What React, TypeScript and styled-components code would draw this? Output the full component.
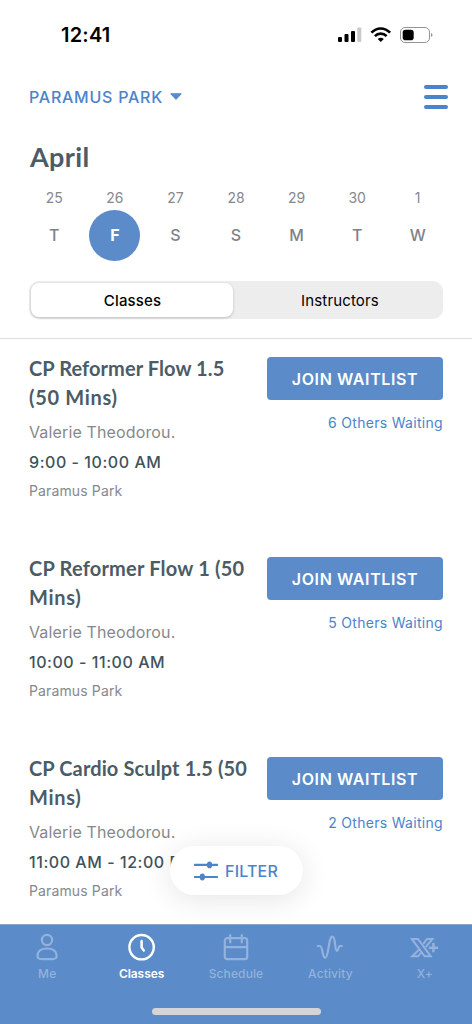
import React from 'react';
import styled, { createGlobalStyle } from 'styled-components';

const BLUE = '#5b8bc9';
const LINK = '#4a84cb';
const SLATE = '#4b5c66';
const GREY = '#85888e';

const GlobalStyle = createGlobalStyle`
  *, *::before, *::after { box-sizing: border-box; }
  body {
    margin: 0;
    background: #fff;
    font-family: Inter, "Liberation Sans", sans-serif;
  }
  button { font: inherit; border: 0; padding: 0; margin: 0; background: none; cursor: pointer; }
`;

const Screen = styled.div`
  position: relative;
  display: flex;
  flex-direction: column;
  width: 472px;
  height: 1024px;
  overflow: hidden;
  background: #fff;
`;

const StatusBar = styled.header`
  display: flex;
  flex: none;
  align-items: center;
  justify-content: space-between;
  height: 70px;
  padding: 0 39px 0 61px;
`;

const Clock = styled.span`
  font-size: 20px;
  font-weight: 600;
  letter-spacing: 0.2px;
  color: #000;
`;

const StatusIcons = styled.svg`
  display: block;
  width: 95px;
  height: 18px;
`;

const TopBar = styled.div`
  display: flex;
  flex: none;
  align-items: center;
  justify-content: space-between;
  height: 54px;
  padding: 0 24px 0 29px;
`;

const LocationButton = styled.button`
  display: flex;
  align-items: center;
  gap: 7px;
  font-size: 16px;
  font-weight: 500;
  letter-spacing: 0.75px;
  color: ${LINK};
  white-space: nowrap;
`;

const Caret = styled.svg`
  width: 12px;
  height: 7px;
  margin-top: -2px;
`;

const MenuButton = styled.button`
  display: flex;
  flex-direction: column;
  gap: 6px;
  width: 24px;
`;

const MenuLine = styled.span`
  height: 4px;
  border-radius: 2px;
  background: ${LINK};
`;

const Month = styled.h1`
  flex: none;
  height: 63px;
  margin: 0;
  padding-left: 30px;
  font: 700 27px/66px Lato, sans-serif;
  letter-spacing: 0.4px;
  color: ${SLATE};
`;

const Week = styled.div`
  display: grid;
  flex: none;
  grid-template-columns: repeat(7, 1fr);
  height: 94px;
  padding: 0 24px;
`;

const Day = styled.div`
  display: flex;
  flex-direction: column;
  align-items: center;
`;

const DayNumber = styled.span`
  height: 23px;
  font-size: 14px;
  line-height: 22px;
  color: ${GREY};
`;

const DayLetter = styled.span<{ $active?: boolean }>`
  width: 51px;
  height: 51px;
  border-radius: 50%;
  font-size: 16px;
  font-weight: ${p => (p.$active ? 700 : 500)};
  line-height: 50px;
  text-align: center;
  color: ${p => (p.$active ? '#fff' : '#7b8289')};
  background: ${p => (p.$active ? BLUE : 'transparent')};
`;

const Segments = styled.div`
  display: flex;
  flex: none;
  height: 38px;
  margin: 0 29px 19px;
  padding: 2px;
  border-radius: 10px;
  background: #ededed;
`;

const Segment = styled.button<{ $active?: boolean }>`
  flex: ${p => (p.$active ? '0 0 202px' : '1')};
  padding-left: ${p => (p.$active ? '1px' : '6px')};
  border-radius: 8px;
  font-size: 15px;
  font-weight: ${p => (p.$active ? 500 : 400)};
  letter-spacing: 0.15px;
  color: #000;
  background: ${p => (p.$active ? '#fff' : 'transparent')};
  box-shadow: ${p => (p.$active ? '0 1px 3px rgba(0, 0, 0, 0.2)' : 'none')};
`;

const ClassList = styled.main`
  flex: 1;
  min-height: 0;
  overflow: hidden;
  border-top: 1px solid #dedede;
`;

const ClassRow = styled.article`
  display: flex;
  justify-content: space-between;
  height: 200px;
  padding: 15px 29px 0;
`;

const ClassInfo = styled.div`
  width: 224px;
  white-space: nowrap;
`;

const ClassTitle = styled.h2`
  margin: 0;
  font: 700 20px/29px Lato, sans-serif;
  color: ${SLATE};
`;

const TitleLine = styled.span<{ $tracking: number }>`
  display: block;
  letter-spacing: ${p => p.$tracking}px;
`;

const Instructor = styled.div`
  margin-top: 5px;
  font-size: 16px;
  line-height: 30px;
  letter-spacing: 0.14px;
  color: ${GREY};
`;

const Time = styled.div`
  font-size: 16px;
  font-weight: 500;
  line-height: 30px;
  letter-spacing: 0.55px;
  color: #40525c;
`;

const Place = styled.div`
  font-size: 14px;
  line-height: 28px;
  letter-spacing: 0.13px;
  color: ${GREY};
`;

const Booking = styled.div`
  flex: none;
  width: 176px;
  padding-top: 3px;
  text-align: right;
`;

const JoinButton = styled.button`
  display: block;
  width: 176px;
  height: 43px;
  border-radius: 4px;
  font-size: 16px;
  font-weight: 600;
  letter-spacing: 0.6px;
  color: #fff;
  background: ${BLUE};
`;

const Waiting = styled.div`
  margin-top: 12px;
  font-size: 14px;
  line-height: 22px;
  letter-spacing: 0.3px;
  color: ${LINK};
  white-space: nowrap;
`;

const FilterButton = styled.button`
  position: absolute;
  left: 170px;
  top: 846px;
  display: flex;
  align-items: center;
  gap: 7px;
  width: 133px;
  height: 49px;
  padding-left: 24px;
  border-radius: 25px;
  font-size: 16px;
  font-weight: 500;
  letter-spacing: 0.2px;
  color: ${LINK};
  background: #fff;
  box-shadow: 0 4px 30px rgba(0, 0, 0, 0.11);
`;

const TabBar = styled.nav`
  position: relative;
  display: grid;
  flex: none;
  grid-template-columns: repeat(5, 1fr);
  height: 100px;
  border-top: 1px solid #8aa5cb;
  background: ${BLUE};
`;

const Tab = styled.a<{ $active?: boolean }>`
  display: flex;
  flex-direction: column;
  align-items: center;
  padding-top: 6px;
  font-size: 12px;
  font-weight: ${p => (p.$active ? 600 : 500)};
  line-height: 16px;
  letter-spacing: ${p => (p.$active ? -0.05 : 0.12)}px;
  color: ${p => (p.$active ? '#fff' : '#94b2dc')};
`;

const TabIcon = styled.svg`
  width: 32px;
  height: 32px;
  margin-bottom: 3px;
  fill: none;
  stroke: currentColor;
  stroke-width: 2.2;
  stroke-linecap: round;
  stroke-linejoin: round;
`;

const HomeIndicator = styled.span`
  position: absolute;
  left: 152px;
  bottom: 9px;
  width: 169px;
  height: 7px;
  border-radius: 4px;
  background: #d5d5d5;
`;

const days = [
  ['25', 'T'], ['26', 'F'], ['27', 'S'], ['28', 'S'], ['29', 'M'], ['30', 'T'], ['1', 'W'],
];

const classes = [
  {
    title: [{ text: 'CP Reformer Flow 1.5', tracking: 0.08 }, { text: '(50 Mins)', tracking: 0.7 }],
    time: '9:00 - 10:00 AM',
    waiting: 6,
  },
  {
    title: [{ text: 'CP Reformer Flow 1 (50', tracking: 0.2 }, { text: 'Mins)', tracking: 0.7 }],
    time: '10:00 - 11:00 AM',
    waiting: 5,
  },
  {
    title: [{ text: 'CP Cardio Sculpt 1.5 (50', tracking: 0.12 }, { text: 'Mins)', tracking: 0.7 }],
    time: '11:00 AM - 12:00 PM',
    waiting: 2,
  },
];

const tabs = [
  {
    label: 'Me',
    icon: (
      <>
        <circle cx="16" cy="9" r="5.1" />
        <path d="M10.5 28.1C7.9 28.1 6.3 27 6.5 24.5C6.8 20.3 10.2 17.5 16 17.5S25.3 20.3 25.6 24.5C25.8 27 24.1 28.1 21.5 28.1Z" />
      </>
    ),
  },
  {
    label: 'Classes',
    icon: (
      <>
        <circle cx="15.6" cy="16.2" r="12.2" strokeWidth="2.4" />
        <path d="M15.6 10V16.6L17.8 19.4" strokeWidth="2.5" />
      </>
    ),
  },
  {
    label: 'Schedule',
    icon: (
      <>
        <rect x="4.8" y="7.2" width="22.4" height="21" rx="2.5" />
        <path d="M4.8 16.2H27.2M10.2 4V11.5M21.8 4V11.5" />
      </>
    ),
  },
  {
    label: 'Activity',
    icon: (
      <path d="M3.8 15H6C8.8 15 8 26.7 11.3 26.7S14.5 5.6 18.3 5.6S20.3 19.8 23 19.8C24.7 19.8 24 15 26 15H28" />
    ),
  },
  {
    label: 'X+',
    icon: (
      <g strokeWidth="2" strokeLinecap="butt" strokeLinejoin="miter" transform="translate(-0.8 0.3)">
        <path d="M3.6 7.6H9.8L22.6 25H16.4Z" />
        <path d="M15.1 12.6L18.8 7.6H24.2L17.5 15.8" />
        <path d="M11 18.2L4 25H9.8L13.8 20.6" />
        <path d="M20.6 16.4H29.8M25.2 11.8V21" strokeWidth="2.5" />
      </g>
    ),
  },
];

export default function App() {
  return (
    <Screen>
      <GlobalStyle />
      <StatusBar>
        <Clock>12:41</Clock>
        <StatusIcons viewBox="0 0 95 18">
          <rect x="0" y="11" width="4" height="5" rx="1" />
          <rect x="6.5" y="8" width="4" height="8" rx="1" />
          <rect x="13" y="5" width="4" height="11" rx="1" />
          <rect x="19.3" y="1.5" width="4" height="14.5" rx="1" fill="#c9c9c9" />
          <g fill="none" stroke="#000" strokeWidth="2.6">
            <path d="M33.4 6.7C38.7 1 46.8 1 52.1 6.7" />
            <path d="M36.9 10.2C40.1 6.8 45.4 6.8 48.6 10.2" />
          </g>
          <path d="M39.7 12.9C41.5 11.3 44 11.3 45.8 12.9L42.75 16Z" />
          <rect x="62.5" y="1.5" width="29" height="15" rx="4.5" fill="#fff" stroke="#949494" />
          <rect x="64.7" y="3.8" width="11" height="10.4" rx="2.8" />
          <path d="M93 7C95 7.7 95 10.3 93 11Z" fill="#949494" />
        </StatusIcons>
      </StatusBar>
      <TopBar>
        <LocationButton>
          PARAMUS PARK
          <Caret viewBox="0 0 12 7">
            <path d="M1 0.8H11L6 6.2Z" fill={BLUE} stroke={BLUE} strokeWidth="1.2" strokeLinejoin="round" />
          </Caret>
        </LocationButton>
        <MenuButton aria-label="Menu">
          <MenuLine />
          <MenuLine />
          <MenuLine />
        </MenuButton>
      </TopBar>
      <Month>April</Month>
      <Week>
        {days.map(([num, letter]) => (
          <Day key={num}>
            <DayNumber>{num}</DayNumber>
            <DayLetter $active={num === '26'}>{letter}</DayLetter>
          </Day>
        ))}
      </Week>
      <Segments>
        <Segment $active>Classes</Segment>
        <Segment>Instructors</Segment>
      </Segments>
      <ClassList>
        {classes.map(c => (
          <ClassRow key={c.time}>
            <ClassInfo>
              <ClassTitle>
                {c.title.map(line => (
                  <TitleLine key={line.text} $tracking={line.tracking}>{line.text}</TitleLine>
                ))}
              </ClassTitle>
              <Instructor>Valerie Theodorou.</Instructor>
              <Time>{c.time}</Time>
              <Place>Paramus Park</Place>
            </ClassInfo>
            <Booking>
              <JoinButton>JOIN WAITLIST</JoinButton>
              <Waiting>{c.waiting} Others Waiting</Waiting>
            </Booking>
          </ClassRow>
        ))}
      </ClassList>
      <FilterButton>
        <svg width="24" height="20" viewBox="0 0 24 20" fill={LINK}>
          <rect x="0" y="2.8" width="24" height="2.2" rx="0.6" />
          <rect x="0" y="14.9" width="24" height="2.2" rx="0.6" />
          <ellipse cx="15.5" cy="3.9" rx="2.6" ry="3.4" />
          <ellipse cx="8.3" cy="16" rx="2.6" ry="3.4" />
        </svg>
        FILTER
      </FilterButton>
      <TabBar>
        {tabs.map(t => (
          <Tab key={t.label} $active={t.label === 'Classes'}>
            <TabIcon viewBox="0 0 32 32">{t.icon}</TabIcon>
            {t.label}
          </Tab>
        ))}
        <HomeIndicator />
      </TabBar>
    </Screen>
  );
}
